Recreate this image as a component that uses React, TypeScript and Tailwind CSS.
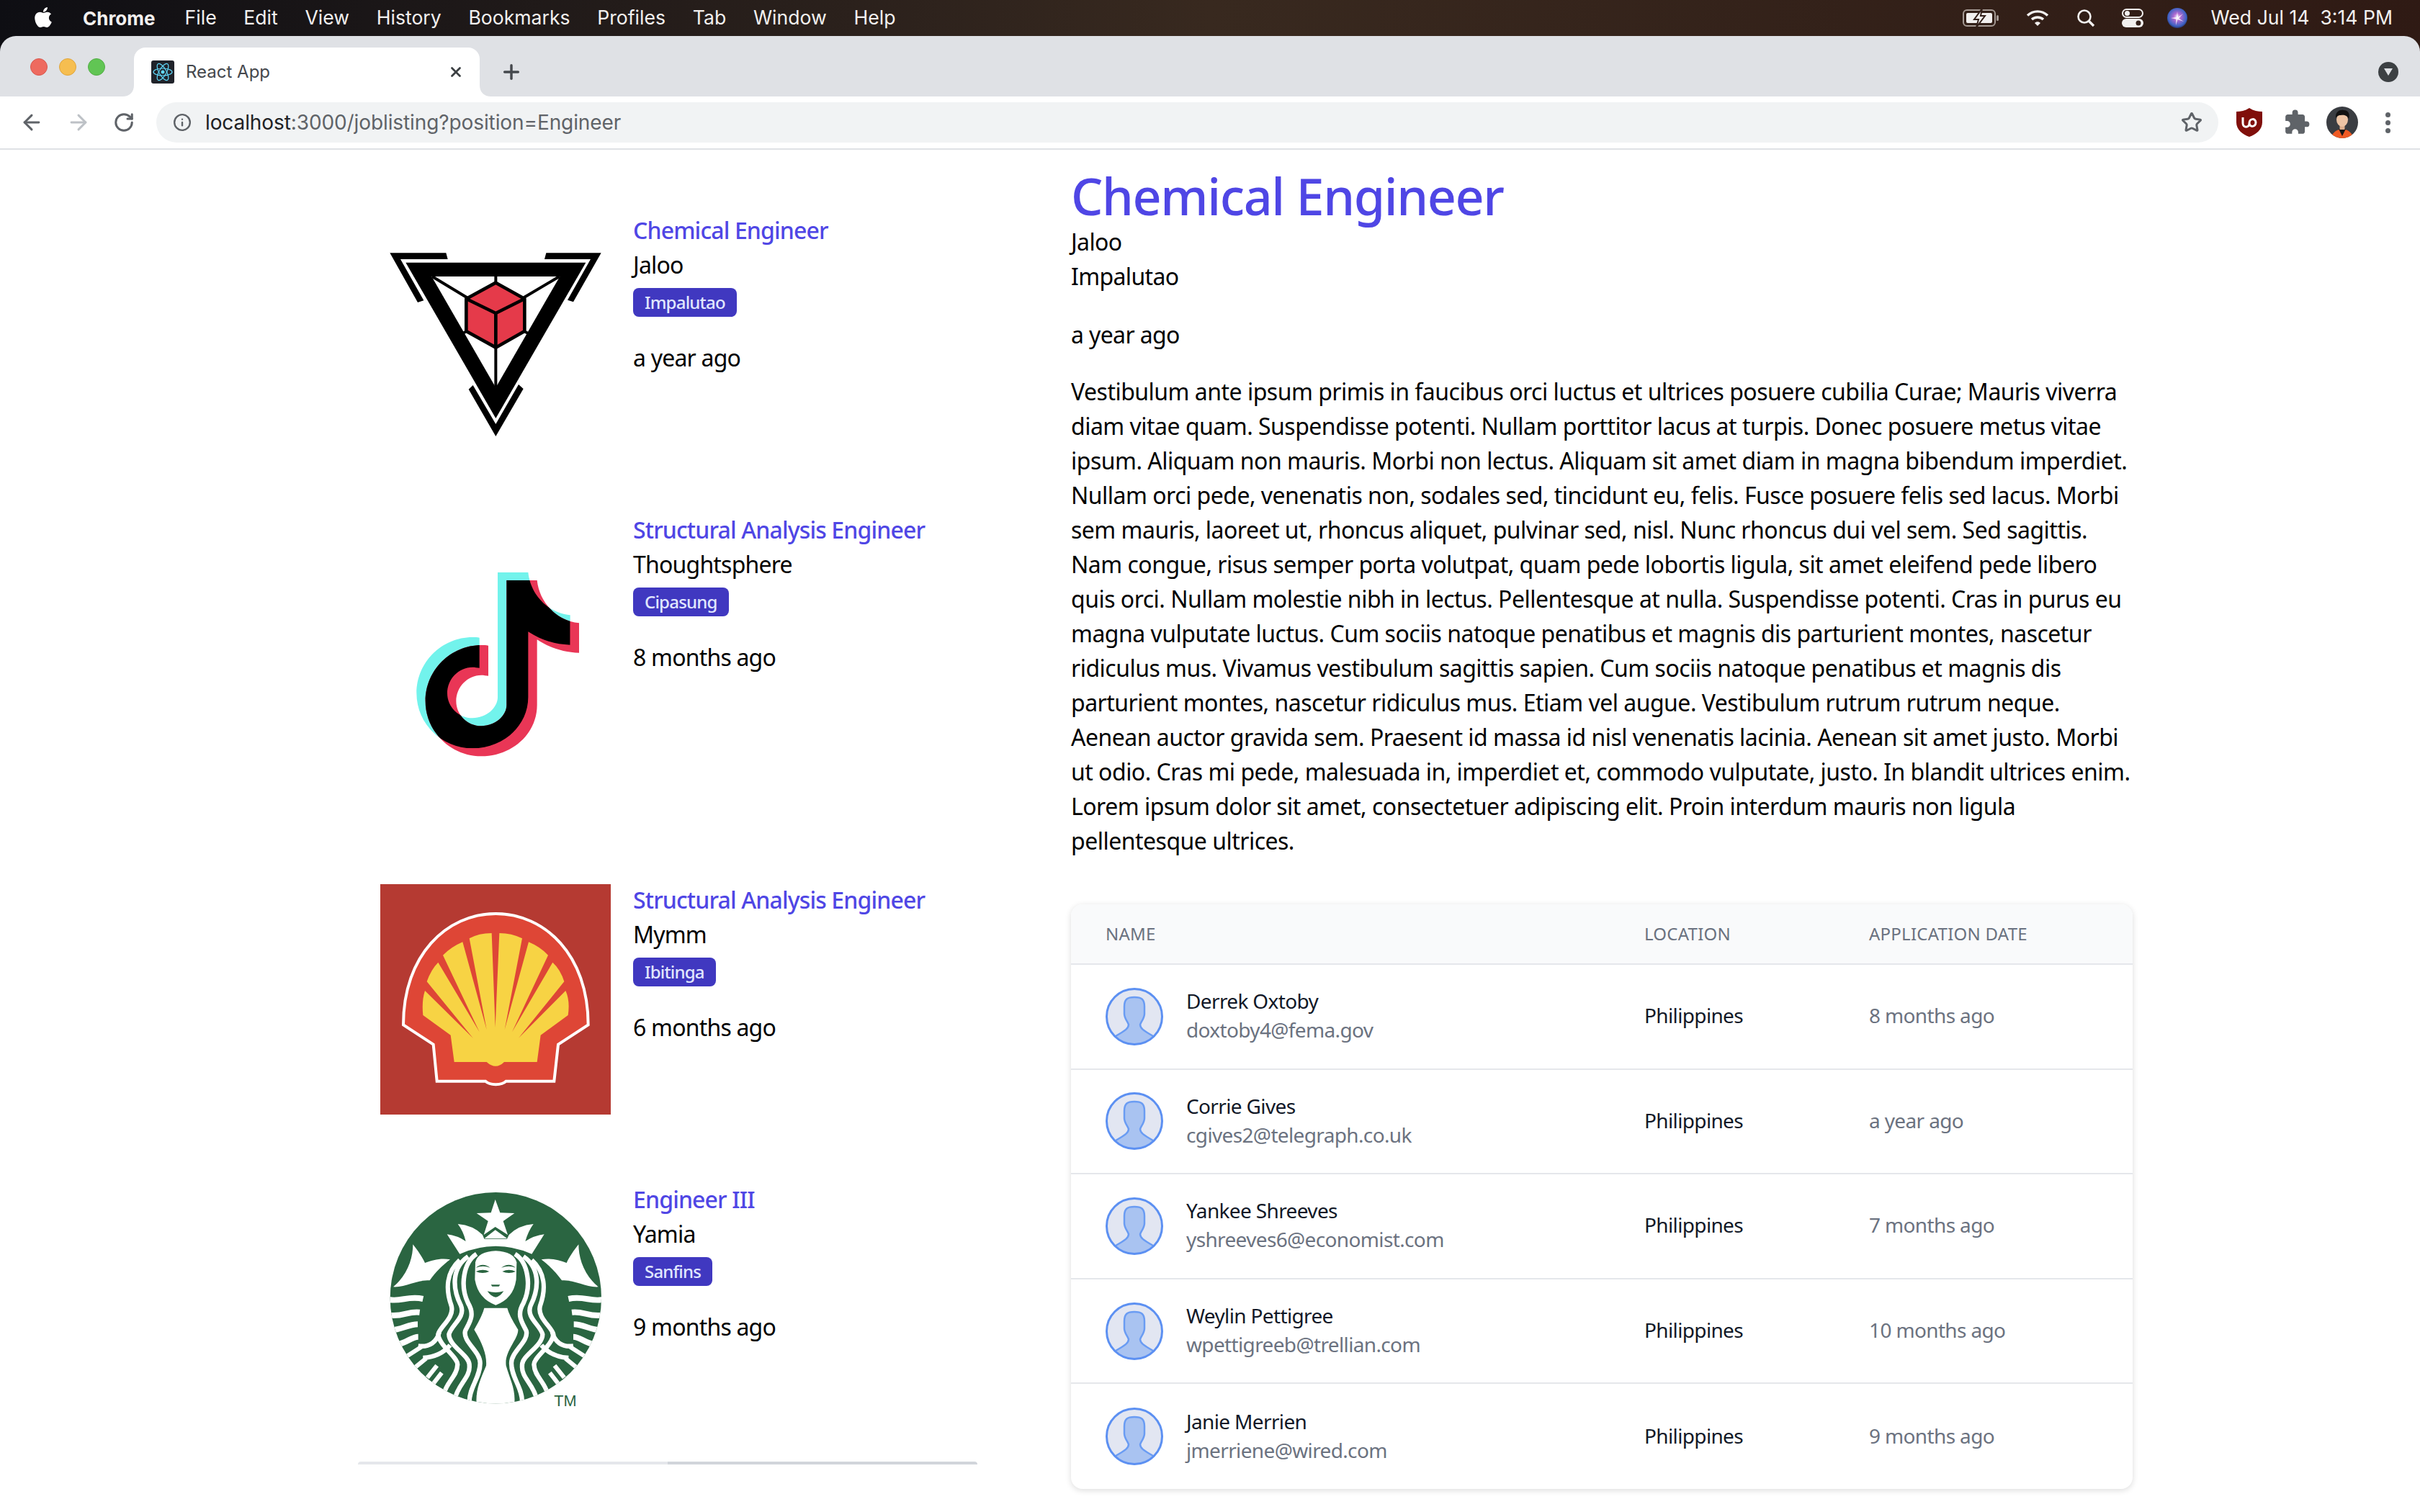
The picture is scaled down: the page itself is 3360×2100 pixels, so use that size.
import React from 'react';
import { ArrowLeft, ArrowRight, RotateCw, Info, Star, X, Plus } from 'lucide-react';
import { FaApple } from 'react-icons/fa';
import { MdExtension } from 'react-icons/md';

const paragraph = [
  'Vestibulum ante ipsum primis in faucibus orci luctus et ultrices posuere cubilia Curae; Mauris viverra',
  'diam vitae quam. Suspendisse potenti. Nullam porttitor lacus at turpis. Donec posuere metus vitae',
  'ipsum. Aliquam non mauris. Morbi non lectus. Aliquam sit amet diam in magna bibendum imperdiet.',
  'Nullam orci pede, venenatis non, sodales sed, tincidunt eu, felis. Fusce posuere felis sed lacus. Morbi',
  'sem mauris, laoreet ut, rhoncus aliquet, pulvinar sed, nisl. Nunc rhoncus dui vel sem. Sed sagittis.',
  'Nam congue, risus semper porta volutpat, quam pede lobortis ligula, sit amet eleifend pede libero',
  'quis orci. Nullam molestie nibh in lectus. Pellentesque at nulla. Suspendisse potenti. Cras in purus eu',
  'magna vulputate luctus. Cum sociis natoque penatibus et magnis dis parturient montes, nascetur',
  'ridiculus mus. Vivamus vestibulum sagittis sapien. Cum sociis natoque penatibus et magnis dis',
  'parturient montes, nascetur ridiculus mus. Etiam vel augue. Vestibulum rutrum rutrum neque.',
  'Aenean auctor gravida sem. Praesent id massa id nisl venenatis lacinia. Aenean sit amet justo. Morbi',
  'ut odio. Cras mi pede, malesuada in, imperdiet et, commodo vulputate, justo. In blandit ultrices enim.',
  'Lorem ipsum dolor sit amet, consectetuer adipiscing elit. Proin interdum mauris non ligula',
  'pellentesque ultrices.',
];

const applicants = [
  { name: 'Derrek Oxtoby', email: 'doxtoby4@fema.gov', date: '8 months ago' },
  { name: 'Corrie Gives', email: 'cgives2@telegraph.co.uk', date: 'a year ago' },
  { name: 'Yankee Shreeves', email: 'yshreeves6@economist.com', date: '7 months ago' },
  { name: 'Weylin Pettigree', email: 'wpettigreeb@trellian.com', date: '10 months ago' },
  { name: 'Janie Merrien', email: 'jmerriene@wired.com', date: '9 months ago' },
];

const menus = ['File', 'Edit', 'View', 'History', 'Bookmarks', 'Profiles', 'Tab', 'Window', 'Help'];

function TriangleLogo() {
  return (
    <svg viewBox="84 54 960 960" className="w-full h-full">
      <path d="M124,214 L358,214 L365,240 L168,240 L265,412 L240,420 Z M775,214 L1004,214 L888,418 L864,410 L960,240 L768,240 Z M452,782 L470,765 L565,927 L660,762 L680,780 L565,978 Z" fill="#000" />
      <path d="M190,254 L940,254 L565,903 Z" fill="#000" />
      <path d="M298,312 L832,312 L565,775 Z" fill="#fff" />
      <path d="M565,312 V338 M300,312 L445,400 M830,312 L682,400 M565,605 V775 M445,540 L425,550 M682,540 L702,550" stroke="#000" strokeWidth="12" fill="none" />
      <path d="M565,338 L685,405 V540 L565,608 L442,540 V405 Z" fill="#e53a4a" stroke="#000" strokeWidth="14" strokeLinejoin="round" />
      <path d="M442,405 L565,465 L685,405 M565,465 V608" stroke="#000" strokeWidth="14" fill="none" />
    </svg>
  );
}

const noteShape =
  'M513,105 L640,105 C650,200 725,275 815,283 L815,407 C750,405 690,385 640,352 L640,625 C640,745 535,838 408,838 C280,838 175,735 175,608 C175,480 280,375 408,375 C418,375 428,375 437,377 L437,503 C428,502 418,500 408,500 C350,500 303,550 303,608 C303,665 350,712 408,712 C465,712 513,670 513,625 Z';

function NoteLogo() {
  return (
    <svg viewBox="24 -138 960 1254" className="w-full h-full">
      <defs>
        <clipPath id="note-clip">
          <path d={noteShape} />
        </clipPath>
      </defs>
      <path d={noteShape} fill="#72f3ec" />
      <path d={noteShape} fill="#e93656" transform="translate(37,33)" />
      <g clipPath="url(#note-clip)">
        <path d={noteShape} fill="#000" transform="translate(37,33)" />
      </g>
    </svg>
  );
}

function ShellLogo() {
  return (
    <svg viewBox="54 54 960 960" className="w-full h-full">
      <rect x="54" y="54" width="960" height="960" fill="#b53a32" />
      <path
        d="M150,640 C150,350 330,177 535,177 C740,177 920,350 920,640 L795,722 L778,875 L578,875 C560,893 510,893 492,875 L290,875 L275,722 Z"
        fill="#de4636"
        stroke="#fff"
        strokeWidth="12"
      />
      <path
        d="M240,498 L440,695 L248,460 Q265,410 295,380 L467,670 L315,350 Q350,315 397,295 L497,660 L425,280 Q465,258 518,258 L533,650 L550,258 Q600,258 645,280 L572,660 L672,295 Q720,315 753,350 L603,670 L772,380 Q805,410 820,460 L630,695 L826,498 Q845,540 836,600 L722,683 L707,795 L570,795 Q535,830 497,795 L362,795 L347,683 L232,600 Q226,540 240,498 Z"
        fill="#f7d344"
      />
    </svg>
  );
}

function SirenLogo() {
  const side = (
    <g fill="none" stroke="#fff">
      <path d="M108,472 C170,420 190,350 190,295 C210,320 230,350 240,372 C270,360 310,350 345,358 C310,385 285,410 260,445 C210,440 160,475 108,472 Z" fill="#fff" stroke="none" />
      <g strokeWidth="24">
        <path d="M90,525 C140,535 170,508 232,522" />
        <path d="M92,590 C150,597 170,572 218,578" />
        <path d="M100,652 C140,652 170,628 210,628" />
        <path d="M125,712 C165,705 185,680 212,680" />
        <path d="M150,770 L225,722" strokeWidth="18" />
        <path d="M190,815 L245,770" strokeWidth="18" />
      </g>
      <g strokeWidth="19">
        <path d="M212,718 C260,725 290,700 300,660" />
        <path d="M232,768 C280,765 320,745 345,715" />
        <path d="M455,335 C400,370 385,470 420,540 C450,590 425,620 408,655 C396,700 470,740 470,790 C470,850 425,890 425,950" />
        <path d="M420,345 C355,390 350,470 390,550 C410,600 350,630 340,670 C340,720 430,760 425,800 C430,850 375,880 365,940" />
        <path d="M385,360 C330,410 325,480 350,550 C365,600 300,640 295,670 C300,720 385,770 375,800 C375,840 330,870 320,915" />
        <path d="M250,850 L290,800 M275,875 L310,830" strokeWidth="18" />
      </g>
    </g>
  );
  return (
    <svg viewBox="54 42 960 960" className="w-full h-full">
      <defs>
        <clipPath id="siren-clip">
          <circle cx="535" cy="518" r="440" />
        </clipPath>
      </defs>
      <circle cx="535" cy="518" r="440" fill="#2a6541" />
      <g clipPath="url(#siren-clip)">
        {side}
        <g transform="translate(1070,0) scale(-1,1)">{side}</g>
        <path d="M487,560 Q480,590 445,650 Q500,740 495,800 C470,860 450,900 455,965 L612,965 C620,900 595,860 578,800 C570,740 630,690 628,650 Q590,590 583,560 Z" fill="#fff" />
      </g>
      <path d="M533,108 L553,163 L613,165 L566,198 L585,255 L533,222 L485,255 L503,198 L455,165 L515,163 Z M488,270 L533,235 L582,270 Z" fill="#fff" />
      <path d="M385,335 L332,253 Q375,258 410,282 Q400,240 377,210 Q440,215 480,255 L487,272 L582,272 L590,255 Q630,215 692,210 Q670,240 658,282 Q695,258 737,253 L685,335 Q535,270 385,335 Z" fill="#fff" />
      <path d="M450,370 Q460,325 535,322 Q610,325 622,370 L620,440 Q610,520 535,548 Q460,520 448,440 Z" fill="#fff" />
      <path d="M452,392 Q480,368 512,392 Q482,380 452,392 Z M558,392 Q590,368 618,392 Q590,380 558,392 Z M452,408 Q482,395 508,408 Q480,420 452,408 Z M562,408 Q590,395 618,408 Q590,420 562,408 Z M515,463 L553,463 L548,470 L520,470 Z M500,490 Q535,500 568,490 Q550,515 535,515 Q518,515 500,490 Z" fill="#2a6541" />
      <text x="778" y="968" fontSize="65" fill="#2a6541" fontFamily="'Liberation Sans', sans-serif">TM</text>
    </svg>
  );
}

function PersonAvatar() {
  return (
    <svg viewBox="0 0 80 80" className="w-[80px] h-[80px] shrink-0">
      <defs>
        <clipPath id="avatar-clip">
          <circle cx="40" cy="40" r="38.5" />
        </clipPath>
      </defs>
      <circle cx="40" cy="40" r="38.5" fill="#e2e6f2" />
      <g clipPath="url(#avatar-clip)">
        <path
          d="M26,26 C26,16 30,13 40,13 C50,13 54,16 54,26 L54,36 C54,42 50,46 48,51 C48,56 52,59 66,67 L66,82 L14,82 L14,67 C28,59 32,56 32,51 C30,46 26,42 26,36 Z"
          fill="#a9c3f1"
          stroke="#6a9cf3"
          strokeWidth="2.5"
        />
      </g>
      <circle cx="40" cy="40" r="38.5" fill="none" stroke="#5c90f2" strokeWidth="3" />
    </svg>
  );
}

function MenuBar() {
  return (
    <div className="h-[50px] flex items-center pl-[44px] pr-[38px] text-[26.6px] text-[#f2f0ef] font-['Inter',sans-serif]">
      <FaApple className="text-[32px] text-white -mt-[3px]" />
      <span className="ml-[39px] font-bold text-[26px]">Chrome</span>
      <div className="flex gap-[37.7px] ml-[41px]">
        {menus.map(m => (
          <span key={m}>{m}</span>
        ))}
      </div>
      <div className="ml-auto flex items-center">
        <svg viewBox="0 0 51 24" className="w-[51px] h-[24px]" fill="none">
          <rect x="1" y="1" width="44" height="22" rx="5" stroke="#a59a94" strokeWidth="2" />
          <rect x="47" y="8" width="3" height="8" rx="1.5" fill="#a59a94" />
          <rect x="5" y="5" width="36" height="14" rx="2" fill="#f2f0ef" />
          <path d="M27,-1 L16,14 H22 L19,25 L31,9 H25 Z" fill="#f2f0ef" stroke="#33201a" strokeWidth="2" />
        </svg>
        <svg viewBox="0 0 32 24" className="w-[32px] h-[24px] ml-[37px]" fill="none" stroke="#f2f0ef" strokeWidth="3.4">
          <path d="M2,8.5 C10,1 22,1 30,8.5" />
          <path d="M8,14 C12,10 20,10 24,14" />
          <path d="M12,19 L16,23 L20,19 C18,16.5 14,16.5 12,19 Z" fill="#f2f0ef" stroke="none" />
        </svg>
        <svg viewBox="0 0 26 26" className="w-[26px] h-[26px] ml-[38px]" fill="none" stroke="#f2f0ef" strokeWidth="2.6">
          <circle cx="11" cy="11" r="8.5" />
          <path d="M17,17 L24,24" strokeWidth="3.4" />
        </svg>
        <svg viewBox="0 0 30 26" className="w-[30px] h-[26px] ml-[37px]">
          <rect x="1" y="1" width="28" height="11" rx="5.5" fill="none" stroke="#f2f0ef" strokeWidth="2" />
          <circle cx="7.5" cy="6.5" r="3.5" fill="#f2f0ef" />
          <rect x="0" y="14" width="30" height="12" rx="6" fill="#f2f0ef" />
          <circle cx="23" cy="20" r="3.5" fill="#33201a" />
        </svg>
        <svg viewBox="0 0 28 28" className="w-[28px] h-[28px] ml-[33px]">
          <defs>
            <radialGradient id="siri-bg" cx="50%" cy="45%" r="60%">
              <stop offset="0" stopColor="#f4f0ff" />
              <stop offset="0.3" stopColor="#b06ad0" />
              <stop offset="0.75" stopColor="#3d63c4" />
              <stop offset="1" stopColor="#241f4d" />
            </radialGradient>
          </defs>
          <circle cx="14" cy="14" r="14" fill="url(#siri-bg)" />
          <path d="M14,5 L15,13 L22,8 L16,14.5 L23,19 L14.5,16 L12,24 L12.5,15.5 L5,14 L13,13 Z" fill="#fff" opacity="0.85" />
        </svg>
        <span className="ml-[33px] whitespace-pre">Wed Jul 14  3:14 PM</span>
      </div>
    </div>
  );
}

function TabBar() {
  return (
    <div className="h-[84px] bg-[#dfe1e5] rounded-t-[22px] pt-[16px] flex font-['Inter',sans-serif]">
      <div className="h-[68px] flex items-center pl-[42px] gap-[16px] pb-[14px]">
        <span className="w-[24px] h-[24px] rounded-full bg-[#ee6a5f] border border-[#d8584e]" />
        <span className="w-[24px] h-[24px] rounded-full bg-[#f6be50] border border-[#dfa53c]" />
        <span className="w-[24px] h-[24px] rounded-full bg-[#61c554] border border-[#52ad45]" />
      </div>
      <div className="relative ml-[40px] w-[480px] h-[68px] bg-white rounded-t-[16px] flex items-center pl-[24px] pr-[22px]">
        <svg viewBox="0 0 16 16" className="absolute -left-[16px] bottom-0 w-[16px] h-[16px]">
          <path d="M16,0 V16 H0 C10,16 16,10 16,0 Z" fill="#fff" />
        </svg>
        <svg viewBox="0 0 16 16" className="absolute -right-[16px] bottom-0 w-[16px] h-[16px]">
          <path d="M0,0 V16 H16 C6,16 0,10 0,0 Z" fill="#fff" />
        </svg>
        <svg viewBox="0 0 32 32" className="w-[32px] h-[32px] shrink-0">
          <rect width="32" height="32" rx="3" fill="#20232a" />
          <g fill="none" stroke="#61dafb" strokeWidth="1.2">
            <ellipse cx="16" cy="16" rx="13" ry="5" />
            <ellipse cx="16" cy="16" rx="13" ry="5" transform="rotate(60 16 16)" />
            <ellipse cx="16" cy="16" rx="13" ry="5" transform="rotate(120 16 16)" />
          </g>
          <circle cx="16" cy="16" r="2.5" fill="#61dafb" />
        </svg>
        <span className="ml-[16px] text-[24px] text-[#45484d] flex-1">React App</span>
        <X className="w-[22px] h-[22px] text-[#3c4043]" strokeWidth={3} />
      </div>
      <div className="h-[68px] flex items-center ml-[28px]">
        <Plus className="w-[32px] h-[32px] text-[#45484d]" strokeWidth={2.6} />
      </div>
      <div className="h-[68px] flex items-center ml-auto pr-[30px]">
        <div className="w-[28px] h-[28px] rounded-full bg-[#3c4043] flex items-center justify-center">
          <svg viewBox="0 0 14 12" className="w-[14px] h-[12px]">
            <path d="M1,1 H13 L7,11 Z" fill="#dfe1e5" />
          </svg>
        </div>
      </div>
    </div>
  );
}

function Toolbar() {
  return (
    <div className="h-[74px] bg-white border-b-2 border-[#dfe1e5] flex items-center pl-[27px] font-['Inter',sans-serif]">
      <ArrowLeft className="w-[34px] h-[34px] text-[#5f6368]" strokeWidth={2.1} />
      <ArrowRight className="w-[34px] h-[34px] text-[#bdc1c6] ml-[31px]" strokeWidth={2.1} />
      <RotateCw className="w-[30px] h-[30px] text-[#5f6368] ml-[31px]" strokeWidth={2.4} />
      <div className="ml-[30px] w-[2863px] h-[56px] bg-[#f1f3f4] rounded-full flex items-center pl-[23px] pr-[22px]">
        <Info className="w-[26px] h-[26px] text-[#5f6368]" strokeWidth={2.2} />
        <span className="ml-[19px] text-[28px] tracking-[-0.1px] text-[#202124]">
          localhost<span className="text-[#5f6368]">:3000/joblisting?position=Engineer</span>
        </span>
        <Star className="w-[30px] h-[30px] text-[#5f6368] ml-auto" strokeWidth={2.4} />
      </div>
      <svg viewBox="0 0 36 40" className="w-[36px] h-[40px] ml-[25px]">
        <path d="M18,0 C24,4 30,5 36,5 V20 C36,30 27,37 18,40 C9,37 0,30 0,20 V5 C6,5 12,4 18,0 Z" fill="#800f0b" />
        <path d="M9,13 V21 C9,28 18,28 18,21 M18,21 C18,14 27,14 27,20 C27,27 18,27 18,21" fill="none" stroke="#fff" strokeWidth="3" />
      </svg>
      <MdExtension className="w-[38px] h-[38px] text-[#5f6368] ml-[29px]" />
      <svg viewBox="0 0 44 44" className="w-[44px] h-[44px] ml-[22px]">
        <defs>
          <clipPath id="profile-clip">
            <circle cx="22" cy="22" r="22" />
          </clipPath>
        </defs>
        <g clipPath="url(#profile-clip)">
          <rect width="44" height="44" fill="#3a3d42" />
          <path d="M6,46 C8,34 16,32 22,31 C28,32 36,34 38,46 Z" fill="#ee5a24" />
          <path d="M17,31 L22,41 L27,31 Z" fill="#161616" />
          <rect x="18.5" y="24" width="7" height="8" fill="#dcae8e" />
          <ellipse cx="22" cy="18" rx="8" ry="10" fill="#ecc3a4" />
          <path d="M13,16 C12,6 20,4 24,5 C31,5 33,11 31,17 C29,12 24,11 20,12 C16,12 15,14 13,16 Z" fill="#111" />
        </g>
      </svg>
      <div className="ml-[38px] flex flex-col gap-[4px]">
        <span className="w-[7px] h-[7px] rounded-full bg-[#5f6368]" />
        <span className="w-[7px] h-[7px] rounded-full bg-[#5f6368]" />
        <span className="w-[7px] h-[7px] rounded-full bg-[#5f6368]" />
      </div>
    </div>
  );
}

function JobCard({ logo, height, title, company, city, age }: { logo: React.ReactNode; height: string; title: string; company: string; city: string; age: string }) {
  return (
    <div className="flex gap-[31px]">
      <div className={`w-[320px] shrink-0 ${height}`}>{logo}</div>
      <div className="-mt-[2px] text-[32px] leading-[48px] tracking-[-0.025em] text-black">
        <div className="font-medium text-[#4f46e5] tracking-[-0.027em]">{title}</div>
        <div>{company}</div>
        <div className="mt-[8px] w-fit h-[40px] px-[16px] rounded-[8px] bg-[#4038c0] text-[#e0e7ff] text-[24px] leading-[40px] font-medium">{city}</div>
        <div className="mt-[33px]">{age}</div>
      </div>
    </div>
  );
}

export default function App() {
  return (
    <div className="w-[3360px] h-[2100px] overflow-hidden bg-white flex flex-col font-['Noto_Sans',sans-serif]">
      <div className="bg-gradient-to-r from-[#0e0e13] via-[#38291f] to-[#2f1a14]">
        <MenuBar />
        <TabBar />
      </div>
      <Toolbar />
      <div className="flex pl-[497px]">
        <div className="w-[860px] pt-[90px]">
          <div className="flex flex-col gap-[96px] pl-[31px]">
            <JobCard logo={<TriangleLogo />} height="h-[320px]" title="Chemical Engineer" company="Jaloo" city="Impalutao" age="a year ago" />
            <JobCard logo={<NoteLogo />} height="h-[418px]" title="Structural Analysis Engineer" company="Thoughtsphere" city="Cipasung" age="8 months ago" />
            <JobCard logo={<ShellLogo />} height="h-[320px]" title="Structural Analysis Engineer" company="Mymm" city="Ibitinga" age="6 months ago" />
            <JobCard logo={<SirenLogo />} height="h-[320px]" title="Engineer III" company="Yamia" city="Sanfins" age="9 months ago" />
          </div>
          <div className="mt-[66px] h-[4px] rounded-t-[4px] overflow-hidden flex">
            <div className="w-1/2 bg-[#e5e7eb]" />
            <div className="w-1/2 bg-[#d1d5db]" />
          </div>
        </div>
        <div className="ml-[130px] w-[1474px] pt-[24px] text-black text-[32px] leading-[48px] tracking-[-0.02em]">
          <h1 className="text-[70px] leading-[80px] font-medium text-[#4f46e5] tracking-[-0.02em]">Chemical Engineer</h1>
          <div>Jaloo</div>
          <div>Impalutao</div>
          <div className="mt-[33px]">a year ago</div>
          <p className="mt-[31px] tracking-[-0.016em]">
            {paragraph.map(line => (
              <span key={line} className="block whitespace-nowrap">{line}</span>
            ))}
          </p>
          <div className="mt-[64px] rounded-[16px] bg-white overflow-hidden shadow-[0_2px_8px_rgba(0,0,0,0.14)]">
            <div className="h-[84px] bg-[#f9fafb] border-b-2 border-[#e5e7eb] px-[48px] grid grid-cols-[748px_312px_1fr] items-center text-[24px] leading-[32px] uppercase tracking-[0.01em] text-[#6b7280]">
              <span>Name</span>
              <span>Location</span>
              <span>Application date</span>
            </div>
            {applicants.map(a => (
              <div key={a.email} className="h-[145.6px] border-b-2 border-[#e5e7eb] last:border-b-0 px-[48px] grid grid-cols-[748px_312px_1fr] items-center text-[28px] leading-[40px]">
                <div className="flex items-center gap-[32px]">
                  <PersonAvatar />
                  <div className="-mt-[3px]">
                    <div className="text-[#111827]">{a.name}</div>
                    <div className="text-[#6b7280]">{a.email}</div>
                  </div>
                </div>
                <div className="text-[#111827] -mt-[3px]">Philippines</div>
                <div className="text-[#6b7280] -mt-[3px]">{a.date}</div>
              </div>
            ))}
          </div>
        </div>
      </div>
    </div>
  );
}
